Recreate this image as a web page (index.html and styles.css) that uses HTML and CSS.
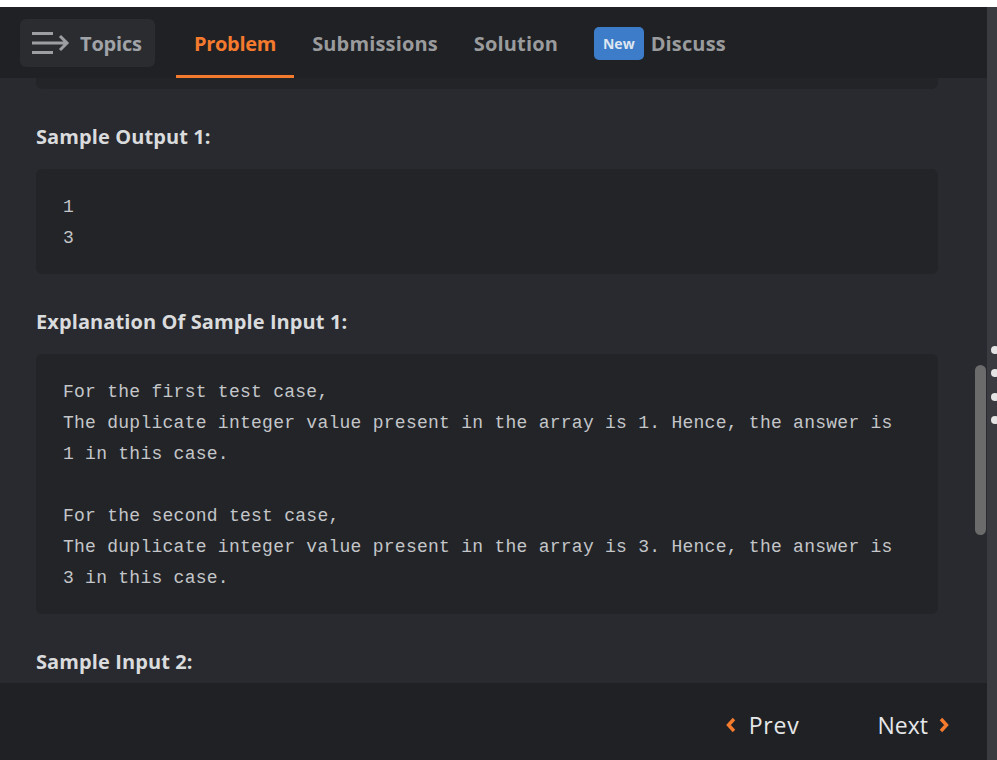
FILE: index.html
```html
<!DOCTYPE html>
<html>
<head>
<meta charset="utf-8">
<link rel="stylesheet" href="styles.css">
</head>
<body>
<div class="app">
  <div class="main">
    <header class="header">
      <button class="topics">
        <svg class="topics-icon" width="38" height="24" viewBox="0 0 38 24"><path d="M0 2.5H21M0 12H35M0 21.5H21M28 5L35 12L28 19" fill="none" stroke="#9c9ea2" stroke-width="3"/></svg>
        <span>Topics</span>
      </button>
      <nav class="tabs">
        <a class="tab active">Problem</a>
        <a class="tab">Submissions</a>
        <a class="tab">Solution</a>
        <a class="tab"><span class="badge">New</span>Discuss</a>
      </nav>
    </header>
    <section class="content">
      <div class="code cut"></div>
      <h3 class="heading">Sample Output 1:</h3>
      <pre class="code">1
3</pre>
      <h3 class="heading">Explanation Of Sample Input 1:</h3>
      <pre class="code">For the first test case,
The duplicate integer value present in the array is 1. Hence, the answer is
1 in this case.

For the second test case,
The duplicate integer value present in the array is 3. Hence, the answer is
3 in this case.</pre>
      <h3 class="heading">Sample Input 2:</h3>
      <div class="scrollbar"></div>
    </section>
    <footer class="footer">
      <a class="nav-btn prev"><svg width="11" height="16" viewBox="0 0 11 16"><path d="M9 2L3.5 8L9 14" fill="none" stroke="#f47a2e" stroke-width="3.4"/></svg><span>Prev</span></a>
      <a class="nav-btn next"><span>Next</span><svg width="11" height="16" viewBox="0 0 11 16"><path d="M2 2L7.5 8L2 14" fill="none" stroke="#f47a2e" stroke-width="3.4"/></svg></a>
    </footer>
  </div>
  <aside class="strip">
    <span class="dot d1"></span>
    <span class="dot d2"></span>
    <span class="dot d3"></span>
    <span class="dot d4"></span>
  </aside>
</div>
</body>
</html>
```
FILE: styles.css
```css
* { box-sizing: border-box; }
html, body { margin: 0; padding: 0; }
body {
  background: #ffffff;
  padding-top: 7px;
  font-family: "Open Sans", "Noto Sans", sans-serif;
  overflow: hidden;
}
.app {
  display: flex;
  height: 753px;
}
.main {
  width: 987px;
  display: flex;
  flex-direction: column;
  background: #282a2f;
}
.strip {
  width: 10px;
  background: #393b40;
  position: relative;
}
.dot {
  position: absolute;
  left: 4px;
  width: 8px;
  height: 8px;
  border-radius: 50%;
  background: #e4e4e4;
}
.d1 { top: 339px; }
.d2 { top: 362px; }
.d3 { top: 386px; }
.d4 { top: 409px; }

.header {
  height: 71px;
  flex: none;
  background: #1f2124;
  display: flex;
  align-items: flex-start;
  padding-left: 20px;
}
.topics {
  margin-top: 12px;
  height: 48px;
  width: 135px;
  border: none;
  border-radius: 6px;
  background: #2a2c30;
  display: flex;
  align-items: center;
  padding: 0 0 0 12px;
  gap: 10px;
  color: #a0a3a7;
  font-family: inherit;
  font-size: 20px;
  font-weight: 700;
  letter-spacing: -0.2px;
}
.topics span { margin-top: 1px; }
.topics-icon { flex: none; }
.tabs {
  display: flex;
  margin-left: 21px;
  height: 71px;
}
.tab {
  display: flex;
  align-items: center;
  padding: 4px 18px 0;
  height: 71px;
  font-size: 20px;
  font-weight: 700;
  letter-spacing: 0.15px;
  color: #9a9b9d;
  border-bottom: 3px solid transparent;
}
.tab.active {
  color: #f47a2e;
  border-bottom-color: #f47a2e;
  letter-spacing: -0.3px;
}
.badge {
  background: #3d7cc9;
  color: #dde6f0;
  font-size: 14px;
  font-weight: 700;
  letter-spacing: 0;
  border-radius: 5px;
  height: 33px;
  padding: 0 9px;
  display: inline-flex;
  align-items: center;
  margin-right: 7px;
}

.content {
  flex: 1;
  position: relative;
  overflow: hidden;
  padding: 0 49px 0 36px;
}
.heading {
  margin: 36px 0 20px;
  font-size: 20px;
  line-height: 24px;
  font-weight: 700;
  letter-spacing: 0.1px;
  color: #dadbdd;
}
.code {
  margin: 0;
  background: #222428;
  border-radius: 6px;
  padding: 23px 27px 20px;
  font-family: "Liberation Mono", "DejaVu Sans Mono", monospace;
  font-size: 18px;
  letter-spacing: 0.26px;
  line-height: 31px;
  color: #c4c6c9;
  white-space: pre;
}
.code.cut {
  height: 11px;
  padding: 0;
  border-radius: 0 0 6px 6px;
}
.scrollbar {
  position: absolute;
  left: 975px;
  top: 287px;
  width: 11px;
  height: 170px;
  border-radius: 6px;
  background: #6b6b6b;
}

.footer {
  height: 77px;
  flex: none;
  background: #1f2124;
  display: flex;
  justify-content: flex-end;
  align-items: flex-start;
  padding: 29px 37px 0 0;
  gap: 78px;
}
.nav-btn {
  display: flex;
  align-items: center;
  gap: 13px;
  font-size: 23px;
  line-height: 26px;
  color: #e6e7e9;
}
.nav-btn.prev span { letter-spacing: 0.8px; }
.nav-btn.next { gap: 11px; }
```
